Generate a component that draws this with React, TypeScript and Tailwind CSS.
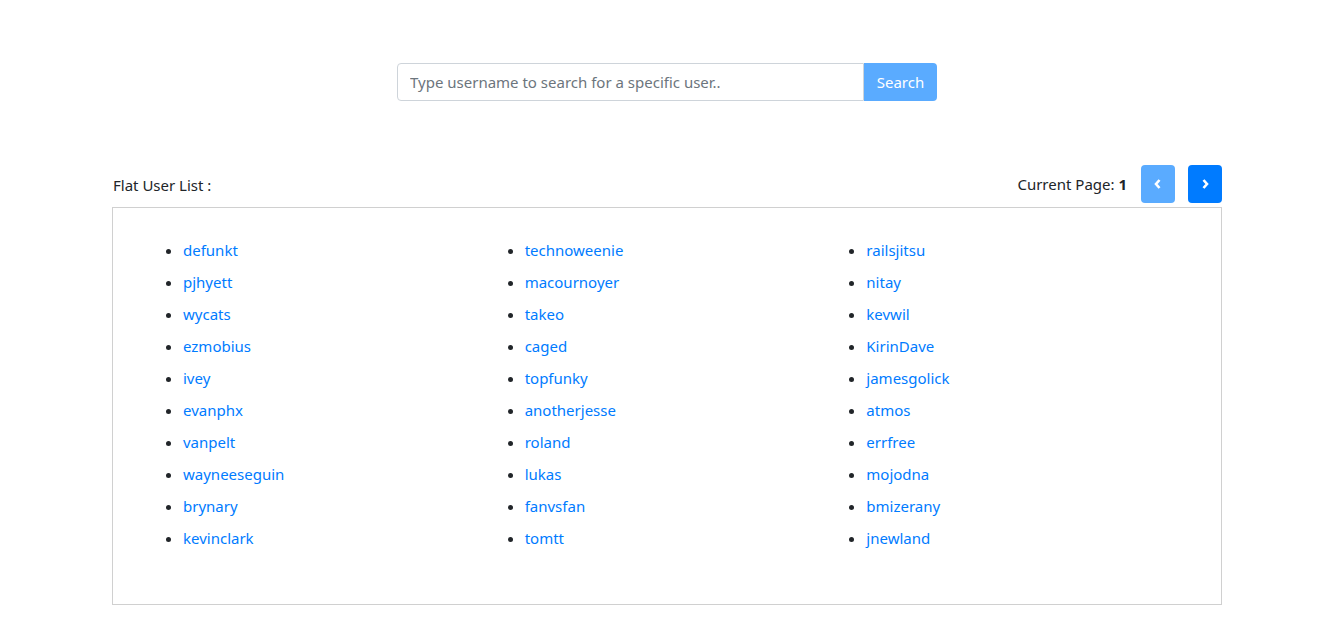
import React from "react";

const columns: string[][] = [
  ["defunkt", "pjhyett", "wycats", "ezmobius", "ivey", "evanphx", "vanpelt", "wayneeseguin", "brynary", "kevinclark"],
  ["technoweenie", "macournoyer", "takeo", "caged", "topfunky", "anotherjesse", "roland", "lukas", "fanvsfan", "tomtt"],
  ["railsjitsu", "nitay", "kevwil", "KirinDave", "jamesgolick", "atmos", "errfree", "mojodna", "bmizerany", "jnewland"],
];

const App: React.FC = () => {
  return (
    <div
      className="w-[1334px] min-h-[642px] bg-white text-[#212529] text-[15px]"
      style={{ fontFamily: '"Noto Sans", "Open Sans", sans-serif' }}
    >
      <div className="w-[1110px] mx-auto pt-[63px]">
        <div className="flex w-[540px] h-[38px] mx-auto">
          <input
            type="text"
            placeholder="Type username to search for a specific user.."
            className="flex-1 h-full border border-[#ced4da] rounded-l-[4px] px-3 text-[15px] text-[#495057] placeholder:text-[#6c757d] outline-none"
          />
          <button className="w-[73px] h-full bg-[#5aabff] text-white rounded-r-[4px] text-[15px]">
            Search
          </button>
        </div>

        <div className="flex items-end justify-between mt-[64px] mb-[4px]">
          <span className="pl-px pb-[6px] leading-6">Flat User List :</span>
          <div className="flex items-center">
            <span className="leading-6 mr-[14px]">
              Current Page: <b>1</b>
            </span>
            <button className="w-[34px] h-[38px] rounded-[4px] bg-[#5aabff] flex items-center justify-center mr-[13px]">
              <svg width="12" height="12" viewBox="0 0 12 12">
                <path d="M7.5 2 L4 6 L7.5 10" stroke="white" strokeWidth="2.6" fill="none" />
              </svg>
            </button>
            <button className="w-[34px] h-[38px] rounded-[4px] bg-[#007bff] flex items-center justify-center">
              <svg width="12" height="12" viewBox="0 0 12 12">
                <path d="M4.5 2 L8 6 L4.5 10" stroke="white" strokeWidth="2.6" fill="none" />
              </svg>
            </button>
          </div>
        </div>

        <div className="border border-[#d0d0d0] h-[398px] pl-[30px] pt-[30px]">
          <div className="grid grid-cols-3 w-[1025px]">
            {columns.map((col, i) => (
              <ul key={i} className="list-disc pl-10 marker:text-[#212529]">
                {col.map((name) => (
                  <li key={name} className="leading-6 mb-2">
                    <a href="#" className="text-[#007bff]">
                      {name}
                    </a>
                  </li>
                ))}
              </ul>
            ))}
          </div>
        </div>
      </div>
    </div>
  );
};

export default App;
